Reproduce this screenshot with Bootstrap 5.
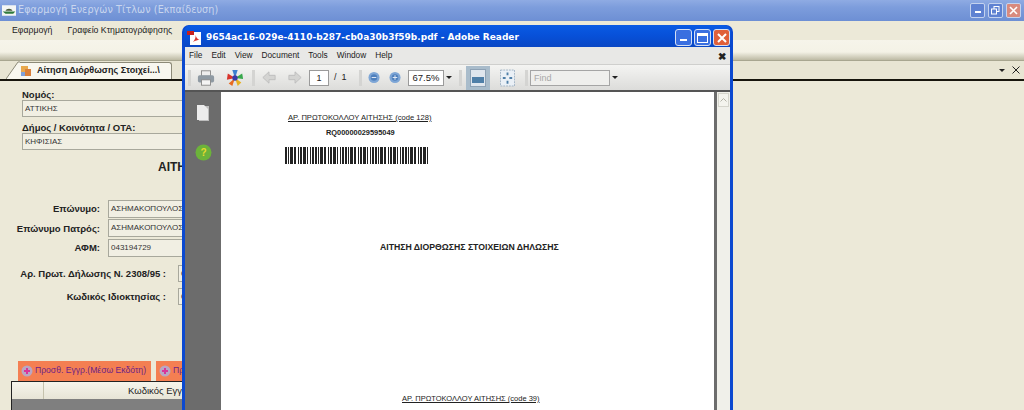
<!DOCTYPE html>
<html lang="el">
<head>
  <meta charset="UTF-8">
  <title>Εφαρμογή Ενεργών Τίτλων</title>
  <link href="https://cdn.jsdelivr.net/npm/bootstrap@5.3.3/dist/css/bootstrap.min.css" rel="stylesheet">
  <style>
    html, body { height: 410px; overflow: hidden; background: #ece9d8; }
    body { font-family: "Liberation Sans", Arial, sans-serif; font-size: 9px; color: #222; }
    svg { display: block; flex: none; }

    /* main application window */
    .app-title { height: 21px; background: linear-gradient(#8fabe3, #7d9ddc 35%, #6d8fd4); color: #c9d6ee; padding-left: 2px; gap: 2px; }
    .app-title .title-text { font-family: "DejaVu Sans", sans-serif; font-size: 9.6px; letter-spacing: .1px; }
    .win-btns { margin-left: auto; margin-right: 3px; gap: 3px; }
    .win-btn { width: 15px; height: 15px; border: 1px solid #c4d2ee; border-radius: 2px; background: #5f82d2; }
    .win-btn.danger { background: #d98a7e; }
    .app-menu { height: 19px; background: #ece9d8; padding-left: 12px; gap: 15px; font-size: 8.7px; }
    .app-band { height: 20px; background: linear-gradient(#f6f4ea, #f4f2e6 60%, #bdbaa4); }
    .tab-strip { height: 21px; background: #e8e5d3; border-top: 1px solid #a8a690; border-bottom: 2px solid #17150c; padding-left: 6px; }
    .doc-tab { height: 17px; margin-top: 1px; width: 152px; background: #f8f7ef; border: 1px solid #8c8a78; border-width: 1px 1px 0 0; border-radius: 0 3px 0 0; font-weight: 700; font-size: 9px; gap: 5px; white-space: nowrap; }
    .strip-ctrl { margin-left: auto; margin-right: 4px; gap: 7px; }
    .form-area { width: 730px; height: 329px; overflow: hidden; white-space: nowrap; }
    .field-label { font-weight: 700; font-size: 9.5px; line-height: 11px; }
    .field-box { height: 17px; background: #f1efe3; border: 1px solid #a8a89c; line-height: 15px; padding-left: 2px; font-size: 8px; color: #333; }
    .form-wide { padding: 8px 0 0 22px; }
    .form-wide .field-box { width: 240px; }
    .form-wide .label-next { margin-top: 5px; }
    .doc-heading { margin: 9px 0 0 158px; font-weight: 700; font-size: 12px; line-height: 16px; height: 40px; }
    .pair-row { height: 19.5px; }
    .pair-row .field-label { width: 100px; text-align: right; flex: none; }
    .pair-row .field-box { margin-left: 8px; width: 120px; height: 18px; }
    .prot-row { height: 23px; }
    .prot-row .field-label { width: 166px; text-align: right; flex: none; }
    .prot-row .field-box { margin-left: 12px; width: 50px; height: 17px; }
    .form-spacer { height: 53px; }
    .action-row { padding-left: 18px; gap: 5px; height: 20px; }
    .orange-btn { height: 20px; background: #f47f52; color: #6d1f86; font-size: 8.6px; padding: 0 5px 0 3px; gap: 2px; flex: none; }
    .grid-head { height: 18px; width: 300px; margin-left: 11px; border-top: 1px solid #222; border-left: 1px solid #222; background: linear-gradient(#f6f5ec, #e7e4d6); font-size: 9.5px; }
    .grid-head .head-a { width: 32px; height: 100%; border-right: 1px solid #c5c2ad; flex: none; }
    .grid-head .head-b { padding-left: 84px; line-height: 17px; }
    .grid-body { height: 14px; width: 300px; margin-left: 11px; background: #7f7f7f; border-left: 1px solid #222; }

    /* floating adobe reader window */
    .pdf-win { position: absolute; left: 182px; top: 25px; width: 551px; height: 395px; background: #0b49d0; border-radius: 7px 7px 0 0; padding: 0 3px; }
    .pdf-title { height: 22px; color: #fff; font-family: "DejaVu Sans", sans-serif; font-weight: 700; font-size: 9px; gap: 3px; margin: 0 -1px; background: linear-gradient(#0a5be4, #0750d8 50%, #0a47c4); border-radius: 7px 7px 0 0; padding: 3px 0 0 3px; white-space: nowrap; }
    .pdf-title .win-btns { margin-right: 1px; gap: 2px; }
    .pdf-btn { width: 17px; height: 17px; border: 1px solid #d5e0f5; border-radius: 3px; background: #3a6fe0; }
    .pdf-btn.danger { background: #e0603a; }
    .pdf-menu { height: 17px; background: #e8e8e6; font-size: 8.3px; padding-left: 4px; gap: 9px; position: relative; }
    .pdf-menu .menu-x { position: absolute; right: 4px; top: 2px; font-weight: 700; font-size: 10px; }
    .pdf-tools { height: 28px; background: linear-gradient(#f4f4f2, #dcdcda); border-top: 1px solid #cfcfcd; padding-left: 3px; font-size: 9px; border-bottom: 2px solid #555; }
    .tool-sep { width: 3px; height: 16px; background: #d4d4d2; flex: none; }
    .page-box { width: 20px; height: 16px; background: #fff; border: 1px solid #9a9a9a; text-align: center; line-height: 14px; }
    .page-total { width: 11px; white-space: nowrap; }
    .zoom-box { width: 36px; height: 16px; background: #fff; border: 1px solid #9a9a9a; text-align: center; line-height: 14px; font-size: 9.5px; }
    .find-box { width: 80px; height: 16px; background: #efefed; border: 1px solid #a5a5a5; color: #a8a8a8; line-height: 14px; padding-left: 3px; }
    .fit-btn { width: 24px; height: 24px; background: #a9bccb; }
    .caret-mini { width: 0; height: 0; border: 3px solid transparent; border-top: 3px solid #222; border-bottom: 0; flex: none; }
    .ml-2px { margin-left: 2px; } .ml-4px { margin-left: 4px; } .ml-5px { margin-left: 5px; }
    .ml-6px { margin-left: 6px; } .ml-7px { margin-left: 7px; } .ml-8px { margin-left: 8px; }
    .ml-9px { margin-left: 9px; } .ml-10px { margin-left: 10px; } .ml-11px { margin-left: 11px; }
    .ml-12px { margin-left: 12px; } .ml-14px { margin-left: 14px; }
    .pdf-body { height: 330px; }
    .pdf-side { width: 36px; background: #6c6c6c; flex: none; gap: 22px; padding: 12px 0 0 0; }
    .pdf-page { width: 493px; background: #fff; flex: none; color: #222; }
    .pdf-scroll { width: 16px; background: #f0f0ea; flex: none; border-left: 3px solid #6c6c6c; }
    .scroll-up { height: 14px; margin: 1px; background: #f4f4ee; border: 1px solid #d5d5cc; }
    .pg-code { padding: 21px 0 0 67px; line-height: 10px; text-decoration: underline; font-size: 7.6px; }
    .pg-rq { padding: 5px 0 0 105px; font-weight: 700; line-height: 10px; font-size: 7.4px; }
    .pg-bar { margin: 9px 0 0 64px; }
    .pg-heading { padding: 77px 0 0 159px; font-weight: 700; line-height: 12px; font-size: 8.7px; }
    .pg-code2 { padding: 141px 0 0 181px; line-height: 10px; text-decoration: underline; font-size: 7.5px; }
  </style>
</head>
<body class="position-relative">

  <div class="app-title d-flex align-items-center">
    <svg width="14" height="13" viewBox="0 0 20 15"><rect width="20" height="15" fill="#f4f6f4"/><path d="M1 9h18l-3 3H5z" fill="#2f7a3c"/><path d="M5 8c1-4 9-4 10 0z" fill="#4a5a3a"/></svg>
    <span class="title-text">Εφαρμογή Ενεργών Τίτλων (Εκπαίδευση)</span>
    <div class="win-btns d-flex">
      <div class="win-btn d-flex align-items-end justify-content-center pb-1"><svg width="6" height="2"><rect width="6" height="2" fill="#fff"/></svg></div>
      <div class="win-btn d-flex align-items-center justify-content-center"><svg width="9" height="9" viewBox="0 0 9 9" fill="none" stroke="#fff"><rect x="3" y=".5" width="5" height="5"/><rect x=".5" y="3" width="5" height="5" fill="#5f82d2"/></svg></div>
      <div class="win-btn danger d-flex align-items-center justify-content-center"><svg width="9" height="9" viewBox="0 0 9 9" stroke="#fff" stroke-width="1.6"><path d="M1 1l7 7M8 1l-7 7"/></svg></div>
    </div>
  </div>
  <div class="app-menu d-flex align-items-center">
    <span>Εφαρμογή</span>
    <span>Γραφείο Κτηματογράφησης</span>
  </div>
  <div class="app-band"></div>
  <div class="tab-strip d-flex">
    <svg width="14" height="18" viewBox="0 0 14 18"><path d="M0 18L12 1h2v17z" fill="#f8f7ef"/><path d="M0 18L12 1h2" fill="none" stroke="#8c8a78"/></svg>
    <div class="doc-tab d-flex align-items-center">
      <svg width="12" height="12" viewBox="0 0 12 12"><rect x="1" y="1" width="7" height="6" fill="#e9a94c"/><rect x="5" y="4" width="6" height="7" fill="#d97f3a"/><rect x="1" y="7" width="4" height="4" fill="#7fa0d8"/></svg>
      <span>Αίτηση Διόρθωσης Στοιχεί...\</span>
    </div>
    <div class="strip-ctrl d-flex align-items-center">
      <span class="caret-mini"></span>
      <svg width="8" height="8" viewBox="0 0 8 8" stroke="#222"><path d="M.5.5l7 7M7.500.5l-7 7"/></svg>
    </div>
  </div>

  <div class="form-area">
    <div class="form-wide">
      <div class="field-label">Νομός:</div>
      <div class="field-box">ΑΤΤΙΚΗΣ</div>
      <div class="field-label label-next">Δήμος / Κοινότητα / ΟΤΑ:</div>
      <div class="field-box">ΚΗΦΙΣΙΑΣ</div>
    </div>
    <div class="doc-heading">ΑΙΤΗΣΗ</div>
    <div class="pair-row d-flex align-items-center"><div class="field-label">Επώνυμο:</div><div class="field-box">ΑΣΗΜΑΚΟΠΟΥΛΟΣ</div></div>
    <div class="pair-row d-flex align-items-center"><div class="field-label">Επώνυμο Πατρός:</div><div class="field-box">ΑΣΗΜΑΚΟΠΟΥΛΟΣ</div></div>
    <div class="pair-row d-flex align-items-center"><div class="field-label">ΑΦΜ:</div><div class="field-box">043194729</div></div>
    <div class="mt-1"></div>
    <div class="prot-row d-flex align-items-center"><div class="field-label">Αρ. Πρωτ. Δήλωσης Ν. 2308/95 :</div><div class="field-box">0</div></div>
    <div class="prot-row d-flex align-items-center"><div class="field-label">Κωδικός Ιδιοκτησίας :</div><div class="field-box">0</div></div>
    <div class="form-spacer"></div>
    <div class="action-row d-flex">
      <div class="orange-btn d-flex align-items-center"><svg width="12" height="12" viewBox="0 0 12 12"><circle cx="6" cy="6" r="5.500" fill="#b9a6c4"/><path d="M6 3v6M3 6h6" stroke="#d8359a" stroke-width="2"/></svg>Προσθ. Εγγρ.(Μέσω Εκδότη)</div>
      <div class="orange-btn d-flex align-items-center"><svg width="12" height="12" viewBox="0 0 12 12"><circle cx="6" cy="6" r="5.500" fill="#b9a6c4"/><path d="M6 3v6M3 6h6" stroke="#d8359a" stroke-width="2"/></svg>Προσθ. Εγγρ.</div>
    </div>
    <div class="grid-head d-flex"><div class="head-a"></div><div class="head-b">Κωδικός Εγγρ</div></div>
    <div class="grid-body"></div>
  </div>

  <div class="pdf-win">
    <div class="pdf-title d-flex align-items-center">
      <svg width="16" height="16" viewBox="0 0 16 16"><rect x="3" y="2" width="11" height="13" fill="#fff"/><path d="M0 1h7v4H0z" fill="#c8201c"/><path d="M6 12c2-2 3-5 2.500-7 1 3 2 4 4 5-2 0-4 .5-6.500 2z" fill="#d8342c"/></svg>
      <span>9654ac16-029e-4110-b287-cb0a30b3f59b.pdf - Adobe Reader</span>
      <div class="win-btns d-flex">
        <div class="pdf-btn d-flex align-items-end justify-content-center pb-1"><svg width="7" height="2"><rect width="7" height="2" fill="#fff"/></svg></div>
        <div class="pdf-btn d-flex align-items-center justify-content-center"><svg width="11" height="10" viewBox="0 0 11 10" fill="none" stroke="#fff"><rect x=".5" y=".5" width="10" height="9"/><path d="M0 2h11" stroke-width="2"/></svg></div>
        <div class="pdf-btn danger d-flex align-items-center justify-content-center"><svg width="10" height="10" viewBox="0 0 10 10" stroke="#fff" stroke-width="2"><path d="M1 1l8 8M9 1l-8 8"/></svg></div>
      </div>
    </div>
    <div class="pdf-menu d-flex align-items-center">
      <span>File</span><span>Edit</span><span>View</span><span>Document</span><span>Tools</span><span>Window</span><span>Help</span>
      <span class="menu-x">✖</span>
    </div>
    <div class="pdf-tools d-flex align-items-center">
      <div class="tool-sep"></div>
      <svg class="ml-6px" width="18" height="20" viewBox="0 0 20 20"><rect x="5" y="2" width="10" height="6" fill="#eee" stroke="#888"/><rect x="1" y="7" width="18" height="8" rx="2" fill="#8f9aa3"/><rect x="5" y="12" width="10" height="6" fill="#f4f4f4" stroke="#888"/></svg>
      <svg class="ml-11px" width="18" height="20" viewBox="0 0 20 20"><path d="M10 10L7 1h6z" fill="#3c7fd0"/><path d="M10 10l8-5 1 6z" fill="#38a84c"/><path d="M10 10l7 5-4 4z" fill="#e8b020"/><path d="M10 10l-3 9-4-3z" fill="#e86a20"/><path d="M10 10L1 12l1-7z" fill="#d8342c"/><circle cx="10" cy="10" r="3" fill="#3a3aa8"/></svg>
      <div class="tool-sep ml-8px"></div>
      <svg class="ml-7px" width="14" height="15" viewBox="0 0 16 15"><path d="M1 7.500L8 1v4h7v5H8v4z" fill="#d4d4d2" stroke="#bbb"/></svg>
      <svg class="ml-12px" width="14" height="15" viewBox="0 0 16 15"><path d="M15 7.500L8 1v4H1v5h7v4z" fill="#d4d4d2" stroke="#bbb"/></svg>
      <div class="page-box ml-7px">1</div>
      <span class="page-total ml-5px">/ &nbsp;1</span>
      <div class="tool-sep ml-14px"></div>
      <svg class="ml-6px" width="12" height="13" viewBox="0 0 13 13"><circle cx="6.500" cy="6.500" r="6" fill="#7ea6d6"/><circle cx="6.500" cy="6.500" r="3.500" fill="#4f80bd"/><path d="M4 6.500h5" stroke="#e8eef6"/></svg>
      <svg class="ml-9px" width="12" height="13" viewBox="0 0 13 13"><circle cx="6.500" cy="6.500" r="6" fill="#7ea6d6"/><circle cx="6.500" cy="6.500" r="3.500" fill="#4f80bd"/><path d="M4 6.500h5M6.500 4v5" stroke="#e8eef6"/></svg>
      <div class="zoom-box ml-7px">67.5%</div>
      <span class="caret-mini ml-2px"></span>
      <div class="tool-sep ml-7px"></div>
      <div class="fit-btn ml-4px d-flex align-items-center justify-content-center"><svg width="16" height="18" viewBox="0 0 16 18"><rect x=".5" y=".5" width="15" height="17" fill="#dfe6ee" stroke="#8ea2b5"/><rect x="2" y="8" width="12" height="6" fill="#4f7fa8"/></svg></div>
      <svg class="ml-10px" width="15" height="18" viewBox="0 0 16 18"><rect x=".5" y=".5" width="15" height="17" fill="#eaf0f6" stroke="#9fb2c4" stroke-dasharray="2 1"/><path d="M8 3v3M8 12v3M3 9h3M10 9h3" stroke="#4f7fa8" stroke-width="2"/></svg>
      <div class="tool-sep ml-10px"></div>
      <div class="find-box ml-2px">Find</div>
      <span class="caret-mini ml-2px"></span>
    </div>
    <div class="pdf-body d-flex">
      <div class="pdf-side d-flex flex-column align-items-center">
        <svg width="14" height="18" viewBox="0 0 14 18"><rect x="3" y="2" width="10" height="15" fill="#bdbdbd"/><path d="M1 1h7l4 4v11H1z" fill="#ececec"/></svg>
        <svg width="17" height="17" viewBox="0 0 17 17"><circle cx="8.500" cy="8.500" r="8" fill="#6cb33a"/><text x="8.500" y="12" font-size="10" font-weight="700" fill="#e7d92c" text-anchor="middle">?</text></svg>
      </div>
      <div class="pdf-page">
        <div class="pg-code">ΑΡ. ΠΡΩΤΟΚΟΛΛΟΥ ΑΙΤΗΣΗΣ (code 128)</div>
        <div class="pg-rq">RQ00000029595049</div>
        <div class="pg-bar" id="barcode"></div>
        <div class="pg-heading">ΑΙΤΗΣΗ ΔΙΟΡΘΩΣΗΣ ΣΤΟΙΧΕΙΩΝ ΔΗΛΩΣΗΣ</div>
        <div class="pg-code2">ΑΡ. ΠΡΩΤΟΚΟΛΛΟΥ ΑΙΤΗΣΗΣ (code 39)</div>
      </div>
      <div class="pdf-scroll">
        <div class="scroll-up d-flex align-items-center justify-content-center"><svg width="7" height="4" viewBox="0 0 7 4" fill="none" stroke="#b5b5aa"><path d="M.5 3.500l3-3 3 3"/></svg></div>
      </div>
    </div>
  </div>

  <script>
    // barcode bars, widths cycle so it looks like the code 128 strip
    const anchoBarras = [2, 1, 1, 1, 3, 1, 2, 2, 1, 1, 2, 1, 3, 1, 1, 2, 1, 1, 2, 1];
    let x = 0, i = 0, rects = '';
    while (x < 144) {
      const w = anchoBarras[i % anchoBarras.length];
      if (i % 2 === 0) rects += `<rect x="${x}" y="0" width="${w}" height="17" fill="#222"/>`;
      x += w;
      i++;
    }
    document.getElementById('barcode').innerHTML = `<svg width="144" height="17">${rects}</svg>`;
  </script>
  <script src="https://cdn.jsdelivr.net/npm/bootstrap@5.3.3/dist/js/bootstrap.bundle.min.js"></script>
</body>
</html>
